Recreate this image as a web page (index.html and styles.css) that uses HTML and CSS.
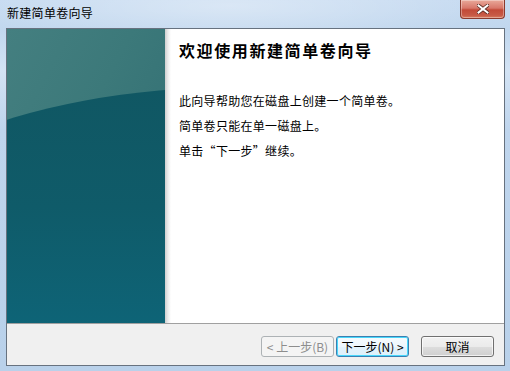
FILE: index.html
```html
<!DOCTYPE html>
<html lang="zh-CN">
<head>
<meta charset="utf-8">
<title>新建简单卷向导</title>
<link rel="stylesheet" href="styles.css">
</head>
<body>
<div class="window">
  <div class="titlebar">
    <span class="title">新建简单卷向导</span>
    <div class="close">
      <svg width="12" height="10" viewBox="0 0 12 10">
        <path d="M1.5 1.5 L10.5 8.5 M10.5 1.5 L1.5 8.5" stroke="#5a2a22" stroke-width="3.6" stroke-linecap="square" fill="none"/>
        <path d="M1.5 1.5 L10.5 8.5 M10.5 1.5 L1.5 8.5" stroke="#ffffff" stroke-width="2" stroke-linecap="square" fill="none"/>
      </svg>
    </div>
  </div>
  <div class="client">
    <div class="content">
      <div class="banner"><div class="swoosh"></div></div>
      <div class="shade"></div>
      <div class="main">
        <h1 class="heading">欢迎使用新建简单卷向导</h1>
        <p class="line first">此向导帮助您在磁盘上创建一个简单卷。</p>
        <p class="line">简单卷只能在单一磁盘上。</p>
        <p class="line">单击“下一步”继续。</p>
      </div>
    </div>
    <div class="buttons">
      <button class="btn disabled">&lt; 上一步(B)</button>
      <button class="btn default">下一步(N) &gt;</button>
      <button class="btn cancel">取消</button>
    </div>
  </div>
</div>
</body>
</html>
```

FILE: styles.css
```css
* { box-sizing: border-box; }
html, body { margin: 0; padding: 0; }
body {
  width: 510px;
  height: 371px;
  overflow: hidden;
  font-family: "Noto Sans CJK SC", "Noto Sans", sans-serif;
  font-size: 12px;
  color: #000;
}
.window {
  width: 510px;
  height: 371px;
  display: flex;
  flex-direction: column;
  background:
    radial-gradient(ellipse 260px 40px at 230px 6px, rgba(255,255,255,0.35), rgba(255,255,255,0) 100%),
    linear-gradient(to bottom, #c7dbf1 0, #c1d7ee 30px, #d3e3f4 70px, #bfd5ed 130px, #b9d1ea 100%);
}
.titlebar {
  height: 28px;
  display: flex;
  align-items: flex-start;
  justify-content: space-between;
}
.title {
  margin: 5px 0 0 7px;
  line-height: 16px;
  font-size: 12px;
  letter-spacing: 0.3px;
}
.close {
  width: 45px;
  height: 19px;
  margin-right: 5px;
  border: 1px solid #8a3a2e;
  border-top: none;
  border-radius: 0 0 4px 4px;
  background: linear-gradient(to bottom, #e9a99a 0, #d8776a 45%, #c24a38 55%, #c75a46 85%, #d97b5e 100%);
  box-shadow: inset 0 0 0 1px rgba(255,255,255,0.35);
  display: flex;
  align-items: center;
  justify-content: center;
}
.close svg { display: block; }
.client {
  margin: 0 5px 0 6px;
  height: 338px;
  border: 1px solid #67727f;
  display: flex;
  flex-direction: column;
  background: #f0f0f0;
}
.content {
  height: 294px;
  display: flex;
  background: #fff;
}
.banner {
  position: relative;
  width: 158px;
  flex: none;
  overflow: hidden;
  background:
    linear-gradient(to bottom right, #447f80 0, #3c797a 40%, #2e6b71 100%);
}
.swoosh {
  position: absolute;
  left: -170px;
  top: 58px;
  width: 800px;
  height: 360px;
  border-radius: 50%;
  background: linear-gradient(to bottom, #105763 0, #0f5b69 120px, #0e6477 240px);
}
.shade {
  width: 6px;
  flex: none;
  background: linear-gradient(to right, #cfcfcf, #ececec 50%, #ffffff);
}
.main {
  flex: 1;
  padding: 11px 0 0 8px;
}
.heading {
  margin: 0;
  font-size: 16px;
  line-height: 20px;
  font-weight: bold;
  letter-spacing: 1.6px;
}
.line {
  margin: 0;
  line-height: 16px;
  font-size: 12px;
  letter-spacing: 0.3px;
}
.line.first { margin-top: 33px; }
.line + .line { margin-top: 9px; }
.buttons {
  height: 42px;
  border-top: 1px solid #a0a0a0;
  display: flex;
  justify-content: flex-end;
  align-items: flex-start;
  padding: 12px 10px 0 0;
}
.btn {
  width: 73px;
  height: 21px;
  padding: 0;
  font-family: "Noto Sans CJK SC", "Noto Sans", sans-serif;
  font-size: 12px;
  line-height: 17px;
  color: #000;
  border: 1px solid #707070;
  border-radius: 3px;
  background: linear-gradient(to bottom, #f2f2f2 0, #ebebeb 50%, #dddddd 51%, #cfcfcf 100%);
  box-shadow: inset 0 0 0 1px rgba(255,255,255,0.7);
}
.btn.disabled {
  color: #8d8d8d;
  border-color: #adb2b5;
  background: #f4f4f4;
  box-shadow: none;
}
.btn.default {
  margin-left: 2px;
  border-color: #3c7fb1;
  background: linear-gradient(to bottom, #f6fbfe 0, #eef7fd 50%, #e4f3fc 51%, #dcf0fb 100%);
  box-shadow: inset 0 0 0 1px #48d7fb;
}
.btn.cancel { margin-left: 12px; }
```
